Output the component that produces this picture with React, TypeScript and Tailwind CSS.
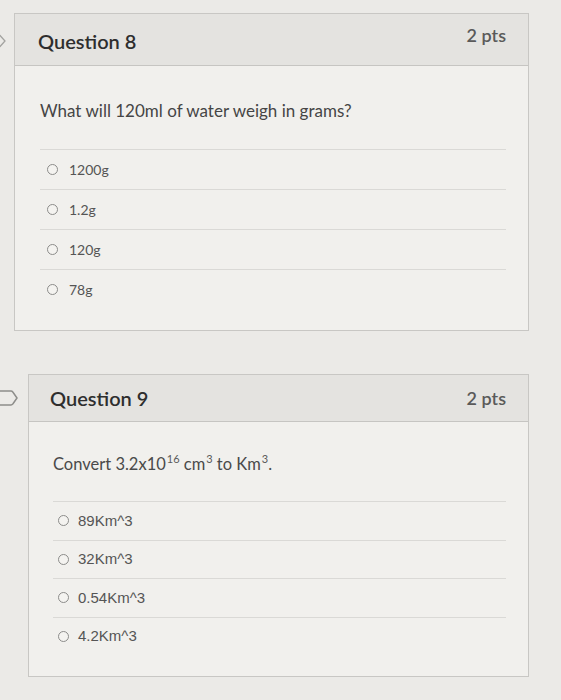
import React from 'react';

type Opt = string;

const lato = { fontFamily: 'Lato, "Open Sans", sans-serif' };

const Radio = () => (
  <span className="inline-block h-[11px] w-[11px] shrink-0 rounded-full border border-[#8c8c8a] bg-[#f4f3f0]" />
);

const Sup = ({ children }: { children: React.ReactNode }) => (
  <sup className="-top-[7px] ml-[1px] text-[11px] text-[#5a5a5a]">{children}</sup>
);

export default function App() {
  const q8: Opt[] = ['1200g', '1.2g', '120g', '78g'];
  const q9: Opt[] = ['89Km^3', '32Km^3', '0.54Km^3', '4.2Km^3'];

  return (
    <div className="min-h-[700px] w-[561px] overflow-hidden bg-[#ebeae7] pt-[13px]" style={lato}>
      {/* question 8 */}
      <div className="flex items-start">
        <div className="w-[14px] shrink-0 pt-[21px]">
          <svg width="14" height="14" viewBox="0 0 14 14">
            <path d="M-10 1.5 H0 L5 7 L0 12.5 H-10" fill="none" stroke="#a3a3a0" strokeWidth="1.3" />
          </svg>
        </div>
        <div className="w-[515px] border border-[#c8c7c4] bg-[#f1f0ed]">
          <div className="flex h-[52px] items-center justify-between border-b border-[#c6c5c2] bg-[#e4e3e0] pl-[23px] pr-[22px]">
            <span className="pt-[2px] text-[20px] font-semibold text-[#2e2e2e]">Question 8</span>
            <span className="-mt-2 text-[18px] font-semibold text-[#5a5a5a]">2 pts</span>
          </div>
          <div className="pl-[25px] pr-[22px] pt-[35px] pb-[21px]">
            <p className="text-[17px] leading-[20px] text-[#454545]">What will 120ml of water weigh in grams?</p>
            <div className="mt-[28px]">
              {q8.map((o) => (
                <div key={o} className="flex h-[40px] items-center gap-[11px] border-t border-[#dad9d6] pl-[7px]">
                  <Radio />
                  <span className="text-[14px] text-[#555]">{o}</span>
                </div>
              ))}
            </div>
          </div>
        </div>
      </div>

      {/* question 9 */}
      <div className="mt-[43px] flex items-start">
        <div className="w-[28px] shrink-0 pt-[16px]">
          <svg width="18" height="16" viewBox="0 0 18 16">
            <path
              d="M-4 1 H11 Q12 1 13 2.2 L17 8 L13 13.8 Q12 15 11 15 H-4"
              fill="none"
              stroke="#8d8d8a"
              strokeWidth="1.5"
            />
          </svg>
        </div>
        <div className="w-[501px] border border-[#c8c7c4] bg-[#f1f0ed]">
          <div className="flex h-[47px] items-center justify-between border-b border-[#c6c5c2] bg-[#e4e3e0] pl-[21px] pr-[22px]">
            <span className="text-[20px] font-semibold text-[#2e2e2e]">Question 9</span>
            <span className="text-[18px] font-semibold text-[#5a5a5a]">2 pts</span>
          </div>
          <div className="pl-[24px] pr-[22px] pt-[32px] pb-[21px]">
            <p className="text-[16.5px] leading-[20px] text-[#4a4a4a]">
              Convert 3.2x10<Sup>16</Sup> cm<Sup>3</Sup> to Km<Sup>3</Sup>.
            </p>
            <div className="mt-[27px]">
              {q9.map((o) => (
                <div
                  key={o}
                  className="flex h-[38.5px] items-center gap-[9px] border-t border-[#dad9d6] pl-[5px]"
                  style={{ fontFamily: '"Liberation Sans", Arial, sans-serif' }}
                >
                  <Radio />
                  <span className="text-[15px] text-[#555]">{o}</span>
                </div>
              ))}
            </div>
          </div>
        </div>
      </div>
    </div>
  );
}
